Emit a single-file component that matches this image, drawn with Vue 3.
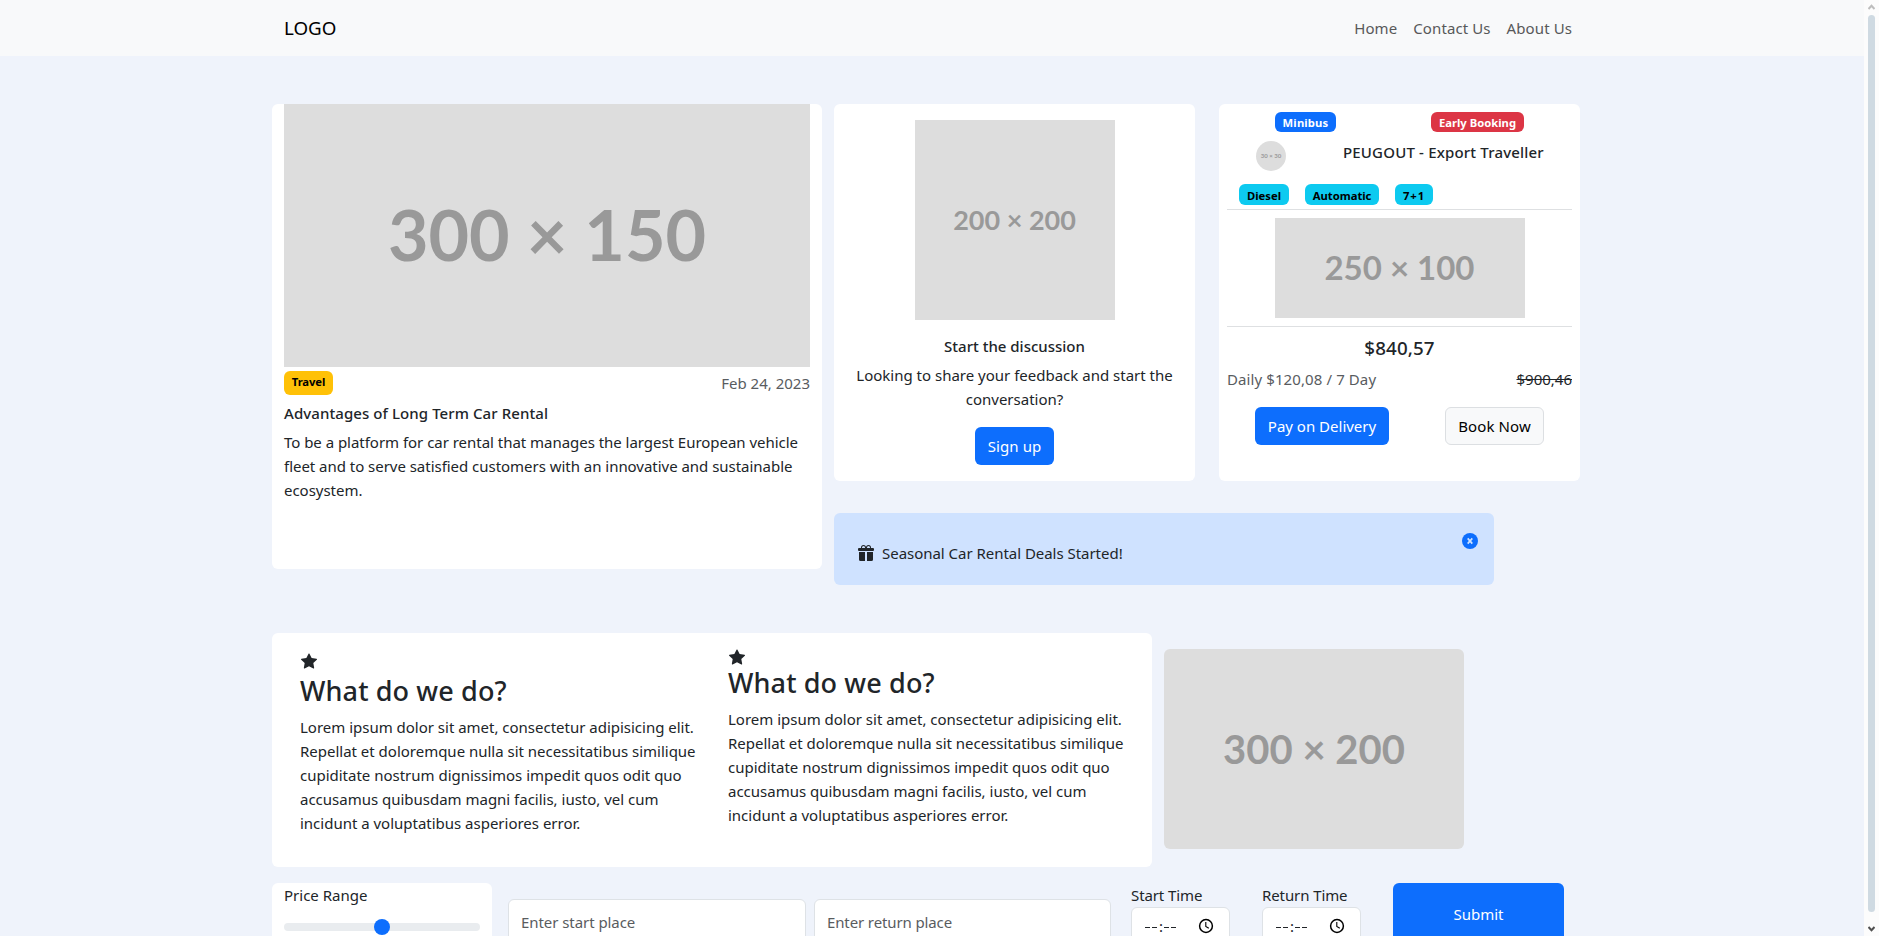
<script setup>
const links = ['Home', 'Contact Us', 'About Us']

const lorem = [
  'Lorem ipsum dolor sit amet, consectetur adipisicing elit.',
  'Repellat et doloremque nulla sit necessitatibus similique',
  'cupiditate nostrum dignissimos impedit quos odit quo',
  'accusamus quibusdam magni facilis, iusto, vel cum',
  'incidunt a voluptatibus asperiores error.',
]

const features = [
  { title: 'What do we do?', lines: lorem, raised: false },
  { title: 'What do we do?', lines: lorem, raised: true },
]

const specs = ['Diesel', 'Automatic', '7+1']
const times = ['Start Time', 'Return Time']
</script>

<template>
  <div class="window">
    <div class="page">
      <nav class="navbar">
        <div class="container navbar-inner">
          <a class="brand">LOGO</a>
          <ul class="nav-links">
            <li v-for="link in links" :key="link">{{ link }}</li>
          </ul>
        </div>
      </nav>

      <main class="container">
        <section class="top">
          <article class="card article">
            <div class="placeholder ph-300x150">300 × 150</div>
            <div class="article-meta">
              <span class="badge badge-travel">Travel</span>
              <span class="muted">Feb 24, 2023</span>
            </div>
            <h6>Advantages of Long Term Car Rental</h6>
            <p>
              To be a platform for car rental that manages the largest European vehicle<br />
              fleet and to serve satisfied customers with an innovative and sustainable<br />
              ecosystem.
            </p>
          </article>

          <div class="top-right">
            <div class="pair">
              <article class="card discussion">
                <div class="placeholder ph-200x200">200 × 200</div>
                <h6>Start the discussion</h6>
                <p>Looking to share your feedback and start the<br />conversation?</p>
                <button class="btn btn-primary btn-signup">Sign up</button>
              </article>

              <article class="card offer">
                <div class="offer-tags">
                  <span class="badge badge-minibus">Minibus</span>
                  <span class="badge badge-early">Early Booking</span>
                </div>
                <div class="offer-title">
                  <div class="placeholder ph-30x30">30 × 30</div>
                  <h6>PEUGOUT - Export Traveller</h6>
                </div>
                <div class="offer-specs">
                  <span v-for="s in specs" :key="s" class="badge badge-spec">{{ s }}</span>
                </div>
                <div class="offer-image">
                  <div class="placeholder ph-250x100">250 × 100</div>
                </div>
                <h5>$840,57</h5>
                <div class="offer-daily">
                  <span class="muted daily">Daily $120,08 / 7 Day</span>
                  <span class="old-price">$900,46</span>
                </div>
                <div class="offer-actions">
                  <button class="btn btn-primary btn-pay">Pay on Delivery</button>
                  <button class="btn btn-light">Book Now</button>
                </div>
              </article>
            </div>

            <div class="alert">
              <svg class="gift" width="16" height="16" viewBox="0 0 16 16" fill="currentColor">
                <path d="M3 2.5a2.5 2.5 0 0 1 5 0 2.5 2.5 0 0 1 5 0v.006c0 .07 0 .27-.038.494H15a1 1 0 0 1 1 1v1a1 1 0 0 1-1 1H1a1 1 0 0 1-1-1V4a1 1 0 0 1 1-1h2.038A3 3 0 0 1 3 2.506zm1.068.5H7v-.5a1.5 1.5 0 1 0-3 0c0 .085.002.274.045.43zM9 3h2.932l.023-.07c.043-.156.045-.345.045-.43a1.5 1.5 0 0 0-3 0zm6 4v7.5a1.5 1.5 0 0 1-1.5 1.5H9V7zM2.5 16A1.5 1.5 0 0 1 1 14.5V7h6v9z" />
              </svg>
              <span>Seasonal Car Rental Deals Started!</span>
              <svg class="close" width="16" height="16" viewBox="0 0 16 16">
                <circle cx="8" cy="8" r="8" fill="currentColor" />
                <path class="cross" d="M5.7 5.4l4.6 5.2M10.3 5.4l-4.6 5.2" />
              </svg>
            </div>
          </div>
        </section>

        <section class="middle">
          <div class="card features">
            <div v-for="(f, i) in features" :key="i" class="feature" :class="{ raised: f.raised }">
              <svg class="star" width="16" height="16" viewBox="0 0 16 16" fill="currentColor">
                <path d="M3.612 15.443c-.386.198-.824-.149-.746-.592l.83-4.73L.173 6.765c-.329-.314-.158-.888.283-.95l4.898-.696L7.538.792c.197-.39.73-.39.927 0l2.184 4.327 4.898.696c.441.062.612.636.282.95l-3.522 3.356.83 4.73c.078.443-.36.79-.746.592L8 13.187l-4.389 2.256z" />
              </svg>
              <h2>{{ f.title }}</h2>
              <p><template v-for="line in f.lines" :key="line">{{ line }}<br /></template></p>
            </div>
          </div>
          <div class="placeholder ph-300x200">300 × 200</div>
        </section>

        <form class="search" @submit.prevent>
          <div class="card price">
            <label>Price Range</label>
            <div class="range"><span class="thumb"></span></div>
          </div>
          <div class="field field-start">Enter start place</div>
          <div class="field field-return">Enter return place</div>
          <div v-for="t in times" :key="t" class="time">
            <label>{{ t }}</label>
            <div class="time-input">
              <span class="time-value"><i></i><i></i><b>:</b><i></i><i></i></span>
              <svg width="16" height="16" viewBox="0 0 16 16" fill="none" stroke="#000">
                <circle cx="8" cy="8" r="6.4" stroke-width="1.5" />
                <path d="M7.8 4v4.4l3 1.9" stroke-width="1.1" />
              </svg>
            </div>
          </div>
          <button class="submit">Submit</button>
        </form>
      </main>
    </div>

    <div class="scrollbar">
      <svg width="7" height="6" viewBox="0 0 7 6" fill="none" stroke="#bdbdbd" stroke-width="2">
        <path d="M.5 5 3.5 1.8 6.5 5" />
      </svg>
      <div class="scroll-thumb"></div>
      <svg width="7" height="6" viewBox="0 0 7 6" fill="none" stroke="#505050" stroke-width="2">
        <path d="M.5 1 3.5 4.2 6.5 1" />
      </svg>
    </div>
  </div>
</template>

<style>
body {
  margin: 0;
  overflow: hidden;
}
</style>

<style scoped>
* {
  box-sizing: border-box;
}
.window {
  display: flex;
  width: 1879px;
  height: 936px;
  overflow: hidden;
  font: 400 15px/24px 'Noto Sans', 'Open Sans', sans-serif;
  color: #212529;
  white-space: nowrap;
}
.page {
  width: 1864px;
  background: #eff3fb;
  overflow: hidden;
}
.container {
  width: 1320px;
  margin: 0 auto;
}
h2,
h5,
h6,
p,
ul {
  margin: 0;
  padding: 0;
}
h6 {
  font-size: 15px;
  font-weight: 500;
  line-height: 20px;
}
.muted {
  color: #595c5f;
}
.card {
  background: #fff;
  border-radius: 6px;
}

/* navbar */
.navbar {
  height: 56px;
  background: #f8f9fa;
}
.navbar-inner {
  display: flex;
  justify-content: space-between;
  padding: 0 20px 0 12px;
}
.brand {
  font-size: 18.75px;
  line-height: 56px;
  color: #000;
}
.nav-links {
  display: flex;
  gap: 16px;
  list-style: none;
  line-height: 56px;
  color: #575859;
  letter-spacing: 0.1px;
}

/* placeholders */
.placeholder {
  display: flex;
  align-items: center;
  justify-content: center;
  background: #ddd;
  color: #999;
  font-family: Lato, sans-serif;
  font-weight: 700;
  line-height: 1;
}
.ph-300x150 {
  height: 263px;
  padding-bottom: 3px;
  font-size: 70px;
}
.ph-200x200 {
  width: 200px;
  height: 200px;
  padding-bottom: 2px;
  font-size: 27px;
}
.ph-30x30 {
  width: 30px;
  height: 30px;
  border-radius: 50%;
  font-size: 6px;
}
.ph-250x100 {
  width: 250px;
  height: 100px;
  padding-bottom: 2px;
  font-size: 33px;
}
.ph-300x200 {
  width: 300px;
  height: 200px;
  margin: 16px 0 0 12px;
  border-radius: 6px;
  font-size: 40px;
}

/* badges and buttons */
.badge {
  border-radius: 6px;
  font-size: 11.25px;
  font-weight: 700;
  line-height: 21px;
  text-align: center;
}
.btn {
  height: 38px;
  padding: 0 0 1px;
  border: 0;
  border-radius: 6px;
  font: inherit;
}
.btn-primary {
  background: #0d6efd;
  color: #fff;
}
.btn-light {
  width: 99px;
  border: 1px solid #dcdfe2;
  background: #f8f9fa;
  color: #000;
  letter-spacing: 0.1px;
}

/* top section */
.top {
  display: flex;
  gap: 12px;
  margin-top: 48px;
}
.article {
  width: 550px;
  height: 465px;
  padding: 0 12px;
}
.article-meta {
  display: flex;
  justify-content: space-between;
  margin: 4px 0 8px;
}
.badge-travel {
  width: 49px;
  height: 24px;
  background: #ffc107;
  color: #000;
  letter-spacing: -0.1px;
}
.article h6 {
  margin-bottom: 7px;
  letter-spacing: 0.08px;
}
.article p {
  letter-spacing: -0.03px;
}
.top-right {
  width: 746px;
}
.pair {
  display: flex;
  gap: 24px;
}
.discussion,
.offer {
  width: 361px;
  height: 377px;
}
.discussion {
  display: flex;
  flex-direction: column;
  align-items: center;
  padding: 16px 0;
  text-align: center;
}
.discussion h6 {
  margin: 16px 0 7px;
}
.btn-signup {
  width: 79px;
  margin-top: 16px;
  letter-spacing: 0.1px;
}
.offer {
  padding: 8px;
}
.offer-tags {
  display: flex;
  gap: 95px;
  padding-left: 48px;
}
.offer-tags .badge {
  height: 20px;
  color: #fff;
}
.badge-minibus {
  width: 61px;
  background: #0d6efd;
  letter-spacing: 0.15px;
}
.badge-early {
  width: 93px;
  background: #dc3545;
}
.offer-title {
  display: flex;
  gap: 57px;
  margin-top: 9px;
  padding-left: 29px;
}
.offer-title h6 {
  margin-top: 1px;
  letter-spacing: 0.18px;
}
.offer-specs {
  display: flex;
  gap: 16px;
  margin-top: 13px;
  padding-left: 12px;
}
.badge-spec {
  height: 21px;
  padding: 0 8px;
  background: #0dcaf0;
  color: #000;
  line-height: 23px;
}
.badge-spec:nth-child(2) {
  width: 74px;
  padding: 0;
}
.badge-spec:last-child {
  width: 38px;
  padding: 0;
  letter-spacing: 0.9px;
}
.offer-image {
  display: flex;
  justify-content: center;
  height: 118px;
  margin-top: 4px;
  padding-top: 8px;
  border: solid #dee0e2;
  border-width: 1px 0;
}
.offer h5 {
  margin: 9px 0 7px;
  font-size: 18.75px;
  font-weight: 500;
  line-height: 24px;
  letter-spacing: 0.12px;
  text-align: center;
}
.offer-daily {
  display: flex;
  justify-content: space-between;
}
.daily {
  letter-spacing: 0.1px;
}
.old-price {
  text-decoration: line-through;
}
.offer-actions {
  display: flex;
  gap: 56px;
  margin-top: 16px;
  padding-left: 28px;
}
.btn-pay {
  width: 134px;
}
.alert {
  position: relative;
  display: flex;
  gap: 8px;
  width: 660px;
  height: 72px;
  margin-top: 32px;
  padding: 28px 24px 0;
  border-radius: 6px;
  background: #cfe2ff;
  letter-spacing: -0.03px;
}
.gift {
  margin-top: 4px;
}
.close {
  position: absolute;
  top: 20px;
  right: 16px;
  color: #0d6efd;
}
.cross {
  stroke: #cfe2ff;
  stroke-width: 1.7;
}

/* middle section */
.middle {
  display: flex;
  margin-top: 48px;
}
.features {
  display: flex;
  width: 880px;
  height: 234px;
  padding-left: 28px;
}
.feature {
  flex: none;
  width: 428px;
  padding-top: 20px;
}
.star {
  display: block;
  margin-left: 1px;
}
.feature h2 {
  margin: 5px 0 7px;
  font-size: 27px;
  font-weight: 500;
  line-height: 34px;
  letter-spacing: 0.12px;
}
.feature p {
  letter-spacing: -0.01px;
}
.feature.raised {
  width: 420px;
  padding-top: 16px;
}
.feature.raised h2 {
  margin-top: 1px;
}

/* search form */
.search {
  display: flex;
  align-items: flex-start;
  margin-top: 16px;
}
.price {
  width: 220px;
  height: 80px;
  padding: 0 12px;
}
.price label {
  display: block;
}
.range {
  height: 8px;
  margin-top: 16px;
  border-radius: 4px;
  background: #e9ecef;
}
.thumb {
  display: block;
  width: 16px;
  height: 16px;
  margin: 0 auto;
  border-radius: 50%;
  background: #0d6efd;
  transform: translateY(-4px);
}
.field {
  height: 58px;
  margin-top: 16px;
  padding: 10px 12px;
  border: 1px solid #dee2e6;
  border-radius: 6px;
  background: #fff;
  color: #595c5f;
}
.field-start {
  width: 298px;
  margin-left: 16px;
  letter-spacing: -0.06px;
}
.field-return {
  width: 297px;
  margin-left: 8px;
  letter-spacing: -0.12px;
}
.time {
  width: 99px;
  margin-left: 32px;
}
.field-return + .time {
  margin-left: 20px;
}
.time label {
  display: block;
  letter-spacing: -0.1px;
}
.time-input {
  display: flex;
  justify-content: space-between;
  align-items: center;
  height: 38px;
  padding: 0 15px 0 13px;
  border: 1px solid #dee2e6;
  border-radius: 6px;
  background: #fff;
}
.time-value {
  display: flex;
  align-items: center;
  gap: 2px;
  height: 22px;
  color: #212529;
}
.time-value i {
  width: 5px;
  height: 1px;
  margin-top: 3px;
  background: #212529;
}
.time-value b {
  width: 3px;
  font-weight: 400;
}
.submit {
  width: 171px;
  height: 62px;
  margin-left: 32px;
  padding: 0 0 1px;
  border: 0;
  border-radius: 6px;
  background: #0d6efd;
  color: #fff;
  font: inherit;
}

/* scrollbar */
.scrollbar {
  display: flex;
  flex-direction: column;
  align-items: center;
  width: 15px;
  padding: 4px 0;
  background: #fcfcfc;
}
.scroll-thumb {
  flex: 1;
  width: 7px;
  margin: 5px 0 14px;
  border-radius: 3.5px;
  background: #cfdae2;
}
</style>
